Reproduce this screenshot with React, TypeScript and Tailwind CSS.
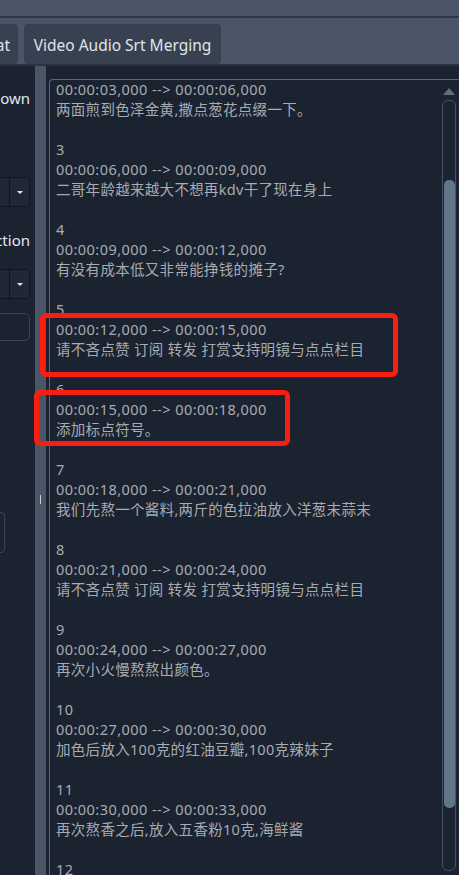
import React from 'react';

const entries: { n: number; start: string; end: string; text: string }[] = [
  { n: 2, start: '00:00:03,000', end: '00:00:06,000', text: '两面煎到色泽金黄,撒点葱花点缀一下。' },
  { n: 3, start: '00:00:06,000', end: '00:00:09,000', text: '二哥年龄越来越大不想再kdv干了现在身上' },
  { n: 4, start: '00:00:09,000', end: '00:00:12,000', text: '有没有成本低又非常能挣钱的摊子?' },
  { n: 5, start: '00:00:12,000', end: '00:00:15,000', text: '请不吝点赞 订阅 转发 打赏支持明镜与点点栏目' },
  { n: 6, start: '00:00:15,000', end: '00:00:18,000', text: '添加标点符号。' },
  { n: 7, start: '00:00:18,000', end: '00:00:21,000', text: '我们先熬一个酱料,两斤的色拉油放入洋葱末蒜末' },
  { n: 8, start: '00:00:21,000', end: '00:00:24,000', text: '请不吝点赞 订阅 转发 打赏支持明镜与点点栏目' },
  { n: 9, start: '00:00:24,000', end: '00:00:27,000', text: '再次小火慢熬熬出颜色。' },
  { n: 10, start: '00:00:27,000', end: '00:00:30,000', text: '加色后放入100克的红油豆瓣,100克辣妹子' },
  { n: 11, start: '00:00:30,000', end: '00:00:33,000', text: '再次熬香之后,放入五香粉10克,海鲜酱' },
  { n: 12, start: '00:00:33,000', end: '00:00:36,000', text: '' },
];

// ---- Left (clipped) settings panel ----

const ComboStub: React.FC = () => (
  <div className="flex justify-end h-[30px]">
    <div className="flex w-[60px] rounded-[3px] border border-[#10151c] bg-[#1f2834]">
      <div className="flex-1 border-r border-[#10151c]" />
      <div className="w-[19px] flex items-center justify-center">
        <span className="block w-0 h-0 border-l-[3px] border-r-[3px] border-t-[3px] border-l-transparent border-r-transparent border-t-[#dfe5ec]" />
      </div>
    </div>
  </div>
);

const LeftPanel: React.FC = () => (
  <div className="w-[35px] overflow-hidden shrink-0">
    <div className="w-[150px] -ml-[115px] pr-[5px] pt-[21px]">
      <div className="text-right text-[15px] leading-[22px] text-[#e2e8f0]">Breakdown</div>
      <div className="mt-[68px]">
        <ComboStub />
      </div>
      <div className="mt-[22px] text-right text-[15px] leading-[22px] text-[#e2e8f0]">Direction</div>
      <div className="mt-[18px]">
        <ComboStub />
      </div>
      <div className="mt-[14px] h-[28px] rounded-[5px] border border-[#3b4452]" />
      <div className="mt-[171px] w-[120px] h-[41px] rounded-[4px] border border-[#3b4452]" />
    </div>
  </div>
);

// ---- Scrollbar ----

const ScrollBar: React.FC = () => (
  <div className="absolute right-[3px] top-[8px] w-[14px] flex flex-col items-center">
    <span className="block w-0 h-0 border-l-[6px] border-r-[6px] border-b-[7px] border-l-transparent border-r-transparent border-b-[#5f6f82]" />
    <div className="mt-[5px] w-[14px] h-[771px] rounded-[6px] border border-[#475264] pt-[79px]">
      <div className="mx-auto w-[11px] h-[628px] rounded-[5px] bg-[#627689]" />
    </div>
  </div>
);

export default function App() {
  return (
    <div
      className="relative w-[459px] h-[875px] overflow-hidden bg-[#1b2330] flex flex-col"
      style={{ fontFamily: '"Noto Sans", "Noto Sans CJK SC", sans-serif' }}
    >
      {/* top bar */}
      <div className="h-[16px] bg-[#4a5568] shrink-0" />
      <div className="h-[2px] bg-[#2e3744] shrink-0" />

      {/* tabs */}
      <div className="h-[48px] bg-[#4a5568] shrink-0 flex items-start pt-[6px] gap-[6px] border-b-2 border-[#2a323e]">
        <div className="h-[40px] w-[18px] rounded-r-[4px] bg-[#37414f] overflow-hidden flex items-center justify-end pr-[8px] pt-[4px]">
          <span className="text-[15.5px] text-[#dfe5ec] whitespace-nowrap">at</span>
        </div>
        <div className="h-[40px] w-[197px] rounded-[4px] bg-[#37414f] flex items-center justify-center pt-[4px]">
          <span className="text-[15.5px] text-[#dfe5ec] whitespace-nowrap">Video Audio Srt Merging</span>
        </div>
      </div>

      {/* body */}
      <div className="flex flex-1 min-h-0">
        <LeftPanel />

        {/* splitter */}
        <div className="w-[11px] shrink-0 bg-[#4a5568] flex items-center justify-center">
          <span className="block w-px h-[9px] bg-[#c8ced6] mt-[58px]" />
        </div>

        {/* text edit */}
        <div className="flex-1 min-w-0 pt-[13px] pl-[3px]">
          <div className="relative h-[900px] w-[410px] rounded-tl-[4px] border-l border-t border-[#2f74b8] pl-[6px]">
            <div className="-mt-[1px] text-[14.5px] leading-[20px] text-[#a8abb0] whitespace-nowrap">
              {entries.map((e, i) => (
                <div key={e.n} className={i === 0 ? '' : 'mt-[20px]'}>
                  {i > 0 && <div className="tracking-[0.45px]">{e.n}</div>}
                  <div className="tracking-[0.45px]">
                    {e.start} --&gt; {e.end}
                  </div>
                  {e.text && <div className="tracking-[0.3px]">{e.text}</div>}
                </div>
              ))}
            </div>
            <ScrollBar />
          </div>
        </div>
      </div>

      {/* red annotation boxes */}
      <div className="absolute left-[40px] top-[313px] w-[358px] h-[64px] rounded-[6px] border-[5px] border-[#f91d12]" />
      <div className="absolute left-[34px] top-[390px] w-[256px] h-[56px] rounded-[6px] border-[5px] border-[#f91d12]" />
    </div>
  );
}
